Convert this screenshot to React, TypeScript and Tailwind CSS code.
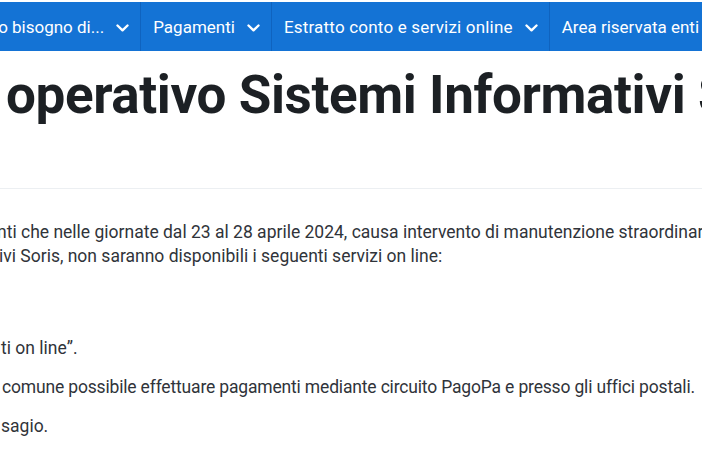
import React from "react";

function Chevron() {
  return (
    <svg width="13" height="8" viewBox="0 0 13 8" className="shrink-0" aria-hidden="true">
      <path d="M1.5 1.5 L6.5 6.3 L11.5 1.5" fill="none" stroke="white" strokeWidth="2.4" strokeLinecap="round" strokeLinejoin="round" />
    </svg>
  );
}

const navItems = [
  { label: "Ho bisogno di...", dropdown: true },
  { label: "Pagamenti", dropdown: true },
  { label: "Estratto conto e servizi online", dropdown: true },
  { label: "Area riservata enti", dropdown: false },
];

export default function App() {
  return (
    <div className="w-[702px] h-[451px] overflow-hidden bg-white font-['Roboto',sans-serif]">
      <nav className="mt-[2px] h-[49px] bg-[#1473d5] flex items-stretch overflow-hidden whitespace-nowrap">
        {navItems.map((item, i) => (
          <div
            key={item.label}
            className={
              "flex items-center gap-[12px] pl-[12px] pr-[11px] pt-[3px] text-white text-[17px] border-r border-[#0f63bf] shrink-0 " +
              (i === 0 ? "ml-[-26px]" : "")
            }
          >
            <span className={i === 2 ? "tracking-[0.2px]" : ""}>{item.label}</span>
            {item.dropdown && <Chevron />}
          </div>
        ))}
      </nav>

      <div className="border-b border-[#eceff2] h-[138px] pt-[13px]">
        <h1 className="ml-[6px] whitespace-nowrap text-[53px] leading-[62px] font-bold text-[#1c2024] tracking-[-0.4px]">
          operativo Sistemi Informativi Soris
        </h1>
      </div>

      <div className="text-[17.5px] leading-[24px] text-[#30343a] whitespace-nowrap">
        <p className="mt-[31px] ml-[-3px]">
          nti che nelle giornate dal 23 al 28 aprile 2024, causa intervento di manutenzione straordinaria
        </p>
        <p className="ml-[-1px]">ivi Soris, non saranno disponibili i seguenti servizi on line:</p>
        <p className="mt-[68px] ml-[1px]">ti on line”.</p>
        <p className="mt-[15px] ml-[2px] tracking-[-0.17px]">
          comune possibile effettuare pagamenti mediante circuito PagoPa e presso gli uffici postali.
        </p>
        <p className="mt-[15px] ml-[1px]">sagio.</p>
      </div>
    </div>
  );
}
